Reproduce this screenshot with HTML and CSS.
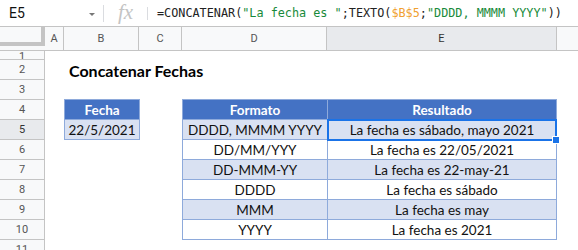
FILE: index.html
```html
<!DOCTYPE html>
<html>
<head>
	<title>Concatenar Fechas</title>
	<link rel="stylesheet" href="styles.css">
</head>
<body>
	<div class="formula-bar">
		<div class="name-box">E5<span class="caret"></span></div>
		<div class="sep"></div>
		<div class="fx">fx</div>
		<div class="sep short"></div>
		<div class="formula">=CONCATENAR(<span class="str">"La fecha es "</span>;TEXTO(<span class="ref">$B$5</span>;<span class="str">"DDDD, MMMM YYYY"</span>))</div>
	</div>

	<div class="sheet">
		<!-- column headers -->
		<div class="corner"><div class="corner-bar"></div></div>
		<div class="col-head">A</div>
		<div class="col-head">B</div>
		<div class="col-head">C</div>
		<div class="col-head">D</div>
		<div class="col-head active">E</div>
		<div class="col-head last"></div>

		<!-- row headers -->
		<div class="row-head first" style="grid-row: 2">1</div>
		<div class="row-head" style="grid-row: 3">2</div>
		<div class="row-head" style="grid-row: 4">3</div>
		<div class="row-head" style="grid-row: 5">4</div>
		<div class="row-head active" style="grid-row: 6">5</div>
		<div class="row-head" style="grid-row: 7">6</div>
		<div class="row-head" style="grid-row: 8">7</div>
		<div class="row-head" style="grid-row: 9">8</div>
		<div class="row-head" style="grid-row: 10">9</div>
		<div class="row-head" style="grid-row: 11">10</div>
		<div class="row-head" style="grid-row: 12">11</div>

		<div class="title">Concatenar Fechas</div>

		<!-- fecha -->
		<div class="cell fecha head top">Fecha</div>
		<div class="cell fecha band">22/5/2021</div>

		<!-- formatos -->
		<div class="cell col-d head top" style="grid-row: 5">Formato</div>
		<div class="cell col-e head top" style="grid-row: 5">Resultado</div>

		<div class="cell col-d band" style="grid-row: 6">DDDD, MMMM YYYY</div>
		<div class="cell col-e band" style="grid-row: 6">La fecha es sábado, mayo 2021</div>

		<div class="cell col-d" style="grid-row: 7">DD/MM/YYY</div>
		<div class="cell col-e" style="grid-row: 7">La fecha es 22/05/2021</div>

		<div class="cell col-d band" style="grid-row: 8">DD-MMM-YY</div>
		<div class="cell col-e band" style="grid-row: 8">La fecha es 22-may-21</div>

		<div class="cell col-d" style="grid-row: 9">DDDD</div>
		<div class="cell col-e" style="grid-row: 9">La fecha es sábado</div>

		<div class="cell col-d band" style="grid-row: 10">MMM</div>
		<div class="cell col-e band" style="grid-row: 10">La fecha es may</div>

		<div class="cell col-d" style="grid-row: 11">YYYY</div>
		<div class="cell col-e" style="grid-row: 11">La fecha es 2021</div>

		<div class="selection"></div>
	</div>
</body>
</html>
```

FILE: styles.css
```css
body {
	margin: 0;
	background: #fff;
	overflow: hidden;
	font-family: Roboto, Arial, sans-serif;
}
.formula-bar {
	display: flex;
	align-items: center;
	height: 27px;
	box-sizing: border-box;
	border-bottom: 1px solid #c4c4c4;
}
.name-box {
	width: 103px;
	box-sizing: border-box;
	padding-left: 9px;
	font-size: 14px;
	color: #111;
	display: flex;
	align-items: center;
}
.caret {
	margin-left: auto;
	margin-right: 8px;
	width: 0;
	height: 0;
	border-left: 3px solid transparent;
	border-right: 3px solid transparent;
	border-top: 3px solid #777;
	margin-top: 2px;
}
.sep {
	width: 1px;
	height: 17px;
	background: #dadce0;
}
.sep.short {
	height: 13px;
}
.fx {
	width: 43px;
	text-align: center;
	font-family: "Liberation Serif", serif;
	font-style: italic;
	font-size: 21px;
	color: #c4c4c4;
	line-height: 1;
	margin-top: -2px;
}
.formula {
	padding-left: 9px;
	font-family: "DejaVu Sans Mono", monospace;
	font-size: 11.8px;
	color: #222;
	white-space: nowrap;
}
.str {
	color: #188a3a;
}
.ref {
	color: #f0a030;
}
.sheet {
	display: grid;
	grid-template-columns: 45px 19px 75px 43px 145px 230px 1fr;
	grid-template-rows: 24px 9px repeat(10, 20px) 11px;
}
.corner {
	grid-row: 1;
	grid-column: 1;
	background: #f8f9fa;
	border-bottom: 1px solid #c4c4c4;
	padding-bottom: 4px;
}
.corner-bar {
	height: 100%;
	box-sizing: border-box;
	border-right: 4px solid #c4c4c4;
	border-bottom: 4px solid #c4c4c4;
}
.col-head {
	grid-row: 1;
	background: #f8f9fa;
	border-right: 1px solid #c4c4c4;
	border-bottom: 1px solid #c4c4c4;
	font-size: 11px;
	color: #555;
	display: flex;
	align-items: center;
	justify-content: center;
}
.col-head.active {
	background: #e8eaed;
	color: #333;
}
.col-head.last {
	border-right: none;
}
.row-head {
	grid-column: 1;
	background: #f8f9fa;
	border-right: 1px solid #c4c4c4;
	border-bottom: 1px solid #c4c4c4;
	font-size: 11px;
	color: #555;
	display: flex;
	align-items: center;
	justify-content: center;
	overflow: hidden;
}
.row-head.first {
	align-items: flex-start;
	padding-top: 4px;
	line-height: 4px;
	box-sizing: border-box;
}
.row-head.active {
	background: #e8eaed;
	color: #333;
}
.title {
	grid-row: 3;
	grid-column: 3 / span 4;
	padding-left: 5px;
	font-family: Lato, "Liberation Sans", sans-serif;
	font-weight: bold;
	font-size: 16px;
	color: #000;
	display: flex;
	align-items: center;
}
.cell {
	font-family: Lato, "Liberation Sans", sans-serif;
	font-size: 13.5px;
	color: #111;
	background: #fff;
	border-left: 1px solid #8eaadb;
	border-bottom: 1px solid #8eaadb;
	display: flex;
	align-items: center;
	justify-content: center;
	white-space: nowrap;
}
.cell.top {
	border-top: 1px solid #8eaadb;
	margin-top: -1px;
}
.cell.head {
	background: #4472c4;
	color: #fff;
	font-weight: bold;
}
.cell.band {
	background: #d9e1f2;
}
.fecha {
	grid-column: 3;
	border-right: 1px solid #8eaadb;
	margin-right: -1px;
}
.fecha.head {
	grid-row: 5;
}
.fecha.band {
	grid-row: 6;
}
.col-d {
	grid-column: 5;
}
.col-e {
	grid-column: 6;
	border-right: 1px solid #8eaadb;
}
.selection {
	grid-column: 6;
	grid-row: 6;
	margin-top: -1px;
	margin-bottom: -1px;
	border: 2px solid #1a73e8;
	position: relative;
	z-index: 2;
}
.selection::after {
	content: "";
	position: absolute;
	right: -5px;
	bottom: -5px;
	width: 6px;
	height: 6px;
	background: #1a73e8;
	border: 1px solid #fff;
}
```
